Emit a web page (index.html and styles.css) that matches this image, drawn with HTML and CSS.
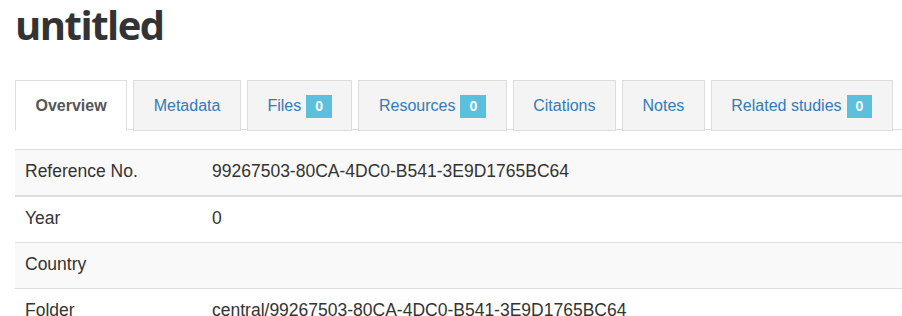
FILE: index.html
```html
<!DOCTYPE html>
<html lang="en">
  <head>
    <meta charset="UTF-8" />
    <meta name="viewport" content="width=device-width, initial-scale=1.0" />
    <title>untitled</title>
    <link rel="stylesheet" href="styles.css">
  </head>
  <body>
    <div class="container">
      <h1 class="study-title">untitled</h1>

      <ul class="nav-tabs">
        <li class="active"><a href="#overview">Overview</a></li>
        <li><a href="#metadata">Metadata</a></li>
        <li><a href="#files">Files <span class="badge">0</span></a></li>
        <li><a href="#resources">Resources <span class="badge">0</span></a></li>
        <li><a href="#citations">Citations</a></li>
        <li><a href="#notes">Notes</a></li>
        <li><a href="#related">Related studies <span class="badge">0</span></a></li>
      </ul>

      <div class="tab-content">
        <table class="study-table">
          <colgroup>
            <col class="label-col" />
            <col />
          </colgroup>
          <tbody>
            <tr class="first">
              <td>Reference No.</td>
              <td>99267503-80CA-4DC0-B541-3E9D1765BC64</td>
            </tr>
            <tr>
              <td>Year</td>
              <td>0</td>
            </tr>
            <tr>
              <td>Country</td>
              <td></td>
            </tr>
            <tr>
              <td>Folder</td>
              <td>central/99267503-80CA-4DC0-B541-3E9D1765BC64</td>
            </tr>
          </tbody>
        </table>
      </div>
    </div>
  </body>
</html>
```

FILE: styles.css
```css
* {
  margin: 0;
  padding: 0;
  box-sizing: border-box;
}
body {
  font-family: "Liberation Sans", Arial, sans-serif;
  background-color: #ffffff;
  color: #333333;
}
.container {
  padding: 0 0 0 15px;
}
.study-title {
  font-family: "Open Sans", "Liberation Sans", sans-serif;
  font-size: 40px;
  font-weight: 700;
  line-height: 44px;
  letter-spacing: -1.5px;
  color: #333333;
  padding-top: 3px;
  margin-bottom: 33px;
}
.nav-tabs {
  list-style: none;
  display: flex;
  align-items: flex-start;
  gap: 6px;
  border-bottom: 1px solid #dddddd;
  height: 50px;
}
.nav-tabs li {
  margin-bottom: -2px;
}
.nav-tabs a {
  display: flex;
  align-items: center;
  gap: 5px;
  height: 51px;
  padding: 1px 19.5px 0;
  font-size: 16px;
  color: #337ab7;
  text-decoration: none;
  white-space: nowrap;
  background: #f4f4f4;
  border: 1px solid #dddddd;
}
.nav-tabs li.active a {
  background: #ffffff;
  color: #555555;
  font-weight: bold;
  border-bottom-color: transparent;
}
.badge {
  display: inline-block;
  font-size: 14px;
  font-weight: bold;
  line-height: 16px;
  padding: 3px 9px 4px;
  background: #5bc0de;
  color: #ffffff;
}
.tab-content {
  padding-top: 19px;
}
.study-table {
  width: 100%;
  table-layout: fixed;
  border-spacing: 0;
  font-size: 17.5px;
  color: #333333;
}
.study-table .label-col {
  width: 187px;
}
.study-table td {
  padding: 9px 10px 11px;
  line-height: 25px;
  border-top: 1px solid #dddddd;
  text-align: left;
  vertical-align: top;
  white-space: nowrap;
}
.study-table tr:nth-child(odd) td {
  background: #f9f9f9;
}
.study-table tr.first + tr td {
  border-top-width: 2px;
}
```
